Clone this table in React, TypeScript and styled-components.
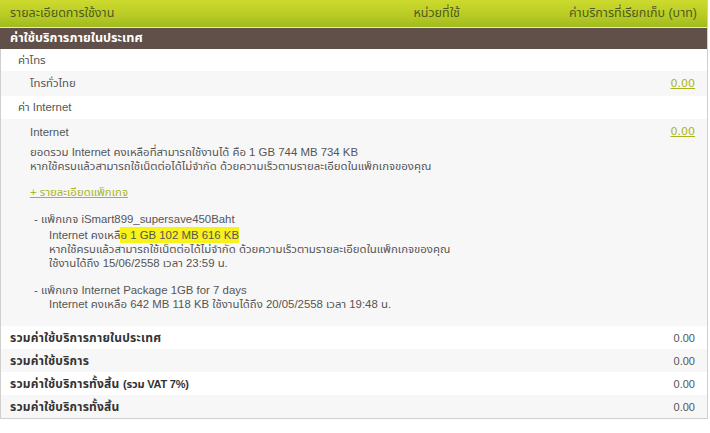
import React from "react";
import styled, { createGlobalStyle } from "styled-components";

const Global = createGlobalStyle`
  html, body { margin: 0; padding: 0; background: #fff; }
  body { font-family: Tahoma, "Liberation Sans", "Noto Sans Thai", "Noto Sans", sans-serif; font-size: 11.4px; color: #555; }
`;

const Table = styled.div`
  width: 708px;
  box-sizing: border-box;
  border-right: 1px solid #cfcfcf;
  border-bottom: 1px solid #cfcfcf;
  border-left: 1px solid #cfcfcf;
`;

const Header = styled.div`
  display: grid;
  grid-template-columns: 1fr 150px 237px;
  align-items: center;
  height: 27px;
  margin-left: -1px;
  padding: 0 10px 0 10px;
  background: linear-gradient(to bottom, #cdda2e 0%, #b9cc24 55%, #9fba1e 100%);
  border-bottom: 1px solid #e6eec0;
  color: #505a22;
  font-size: 12.5px;
`;

const HeadCell = styled.div<{ $right?: boolean }>`
  text-align: ${(p) => (p.$right ? "right" : "left")};
`;

const SectionBar = styled.div`
  height: 21px;
  display: flex;
  align-items: center;
  margin-left: -1px;
  padding-left: 10px;
  background: #614f49;
  color: #fff;
  font-weight: bold;
  font-size: 12.6px;
`;

const Row = styled.div<{ $alt?: boolean; $h: number; $indent: number }>`
  display: flex;
  align-items: center;
  justify-content: space-between;
  height: ${(p) => p.$h}px;
  padding: 0 12px 0 ${(p) => p.$indent}px;
  background: ${(p) => (p.$alt ? "#f8f7f8" : "#fff")};
`;

const Label = styled.span<{ $bold?: boolean }>`
  font-weight: ${(p) => (p.$bold ? "bold" : "normal")};
  color: ${(p) => (p.$bold ? "#333" : "#555")};
  font-size: ${(p) => (p.$bold ? "12px" : "inherit")};
  letter-spacing: ${(p) => (p.$bold ? "0.2px" : "normal")};
`;

const Narrow = styled.span`
  font-size: 11px;
  letter-spacing: -0.2px;
`;

const Amount = styled.span`
  color: #555;
  font-size: 11px;
`;

const AmountLink = styled.a`
  color: #a8b521;
  text-decoration: underline;
  font-size: 11px;
  font-family: Tahoma, "DejaVu Sans", sans-serif;
`;

const Block = styled.div`
  background: #f8f7f8;
  padding: 5px 12px 0 29px;
  height: 207px;
  box-sizing: border-box;
`;

const BlockTop = styled.div`
  display: flex;
  justify-content: space-between;
  height: 15px;
  align-items: center;
`;

const Para = styled.div<{ $indent?: number; $top?: number; $lh?: number }>`
  margin-top: ${(p) => p.$top ?? 0}px;
  padding-left: ${(p) => p.$indent ?? 0}px;
  line-height: ${(p) => p.$lh ?? 14}px;
`;

const PkgLink = styled.a`
  color: #a8b521;
  text-decoration: underline;
  display: inline-block;
`;

const Hl = styled.span`
  background: #f7f21a;
  padding: 2px 0;
`;

export default function App() {
  return (
    <>
      <Global />
      <Table>
        <Header>
          <HeadCell>รายละเอียดการใช้งาน</HeadCell>
          <HeadCell $right>หน่วยที่ใช้</HeadCell>
          <HeadCell $right>ค่าบริการที่เรียกเก็บ (บาท)</HeadCell>
        </Header>
        <SectionBar>ค่าใช้บริการภายในประเทศ</SectionBar>
        <Row $h={22} $indent={17}>
          <Label>ค่าโทร</Label>
        </Row>
        <Row $h={25} $indent={29} $alt>
          <Label>โทรทั่วไทย</Label>
          <AmountLink>0.00</AmountLink>
        </Row>
        <Row $h={23} $indent={17}>
          <Label>ค่า Internet</Label>
        </Row>
        <Block>
          <BlockTop>
            <Label>Internet</Label>
            <AmountLink>0.00</AmountLink>
          </BlockTop>
          <Para $top={7} $indent={-1} $lh={13.5}>
            ยอดรวม Internet คงเหลือที่สามารถใช้งานได้ คือ 1 GB 744 MB 734 KB
            <br />
            หากใช้ครบแล้วสามารถใช้เน็ตต่อได้ไม่จำกัด ด้วยความเร็วตามรายละเอียดในแพ็กเกจของคุณ
          </Para>
          <Para $top={13} $indent={-2} $lh={13.5}>
            <PkgLink>+ รายละเอียดแพ็กเกจ</PkgLink>
          </Para>
          <Para $top={13} $indent={4} $lh={13.5}>
            - แพ็กเกจ iSmart899_supersave450Baht
          </Para>
          <Para $top={2} $indent={19}>
            Internet คงเหล<Hl>ือ 1 GB 102 MB 616 KB</Hl>
            <br />
            หากใช้ครบแล้วสามารถใช้เน็ตต่อได้ไม่จำกัด ด้วยความเร็วตามรายละเอียดในแพ็กเกจของคุณ
            <br />
            ใช้งานได้ถึง 15/06/2558 เวลา 23:59 น.
          </Para>
          <Para $top={13} $indent={4}>
            - แพ็กเกจ Internet Package 1GB for 7 days
          </Para>
          <Para $indent={19}>
            Internet คงเหลือ 642 MB 118 KB ใช้งานได้ถึง 20/05/2558 เวลา 19:48 น.
          </Para>
        </Block>
        <Row $h={23} $indent={9}>
          <Label $bold>รวมค่าใช้บริการภายในประเทศ</Label>
          <Amount>0.00</Amount>
        </Row>
        <Row $h={23} $indent={9} $alt>
          <Label $bold>รวมค่าใช้บริการ</Label>
          <Amount>0.00</Amount>
        </Row>
        <Row $h={23} $indent={9}>
          <Label $bold>
            รวมค่าใช้บริการทั้งสิ้น <Narrow>(รวม VAT 7%)</Narrow>
          </Label>
          <Amount>0.00</Amount>
        </Row>
        <Row $h={23} $indent={9} $alt>
          <Label $bold>รวมค่าใช้บริการทั้งสิ้น</Label>
          <Amount>0.00</Amount>
        </Row>
      </Table>
    </>
  );
}
